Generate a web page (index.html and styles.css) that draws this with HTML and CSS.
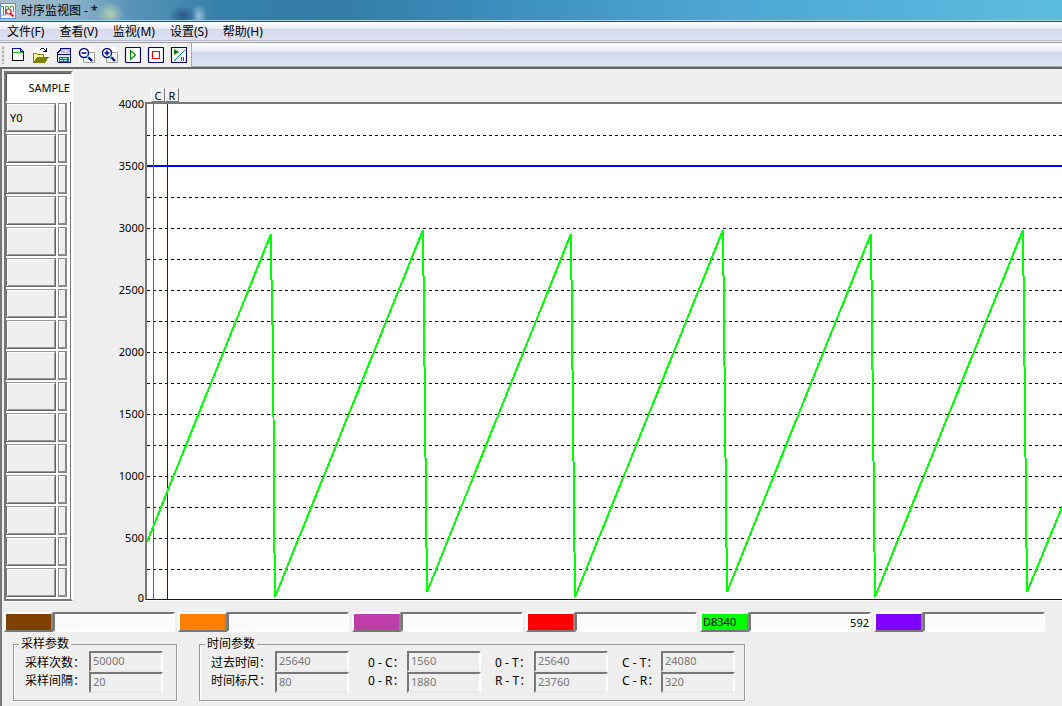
FILE: index.html
```
<!DOCTYPE html>
<html lang="zh-CN">
<head>
<meta charset="utf-8">
<title>时序监视图</title>
<link rel="stylesheet" href="styles.css">
</head>
<body>
<header class="titlebar">
  <svg class="app-icon" width="16" height="16" viewBox="0 0 16 16" fill="none">
    <rect x=".5" y=".5" width="15" height="15" fill="#f4f8ff" stroke="#5b8fe8"/>
    <path d="M1 3.500h2.500V12M5.500 12V3.500h3V6M10.500 5V3.500h3V9" stroke="#5f9a35"/>
    <path d="M1 12.500h5" stroke="#b8cca0"/>
    <circle cx="8.500" cy="8.500" r="2.500" fill="#fff" stroke="#d02020" stroke-width="1.200"/>
    <path d="M10.500 10.500l3 3" stroke="#d02020" stroke-width="1.800"/>
  </svg>
  <h1 class="title">时序监视图 - *</h1>
</header>
<nav class="menubar">
  <button class="menu">文件(F)</button>
  <button class="menu">查看(V)</button>
  <button class="menu">监视(M)</button>
  <button class="menu">设置(S)</button>
  <button class="menu">帮助(H)</button>
</nav>
<div class="toolbar">
  <div class="tools">
    <span class="grip"></span>
    <button class="tool" aria-label="新建"><svg width="17" height="17" viewBox="0 0 17 17" fill="none" shape-rendering="crispEdges"><path d="M4 1h7l3 3v9H4z" fill="#fff"/><path d="M3.500 1v13M14.500 5v9M3 13.500h12" stroke="#000"/><path d="M3 1.500h8M11.500 1v4M12 2.500h1M13 3.500h1M14.500 4v4M11 4.500h4" stroke="#0000d0"/><path d="M4 5.500h10" stroke="#1ec81e"/></svg></button>
    <button class="tool" aria-label="打开"><svg width="17" height="17" viewBox="0 0 17 17" fill="none" shape-rendering="crispEdges"><path d="M1 1h16v15H1z" fill="#fff"/><path d="M8 2.500h1M9 1.500h3M12 2.500h1M13 3.500h1M11 4.500h4M14.500 1v4" stroke="#000070"/><path d="M1 6h4l1 1h6v3H5l-4 5z" fill="#fff8a0"/><path d="M1.500 15V6.500h3l1 1h6V10" stroke="#808000"/><path d="M5 10h12l-4 6H1z" fill="#808000"/></svg></button>
    <button class="tool" aria-label="保存"><svg width="17" height="17" viewBox="0 0 17 17" fill="none" shape-rendering="crispEdges"><path d="M5 1h10v15H2V5z" fill="#e8e8f0"/><path d="M2.500 15V5.500h1v-1h1v-1h1v-2h10V15.500h-13" stroke="#000080"/><path d="M6 2h9v4H6z" fill="#c0c0c8"/><path d="M10 3h2v2h-2z" fill="#fff"/><path d="M3 7.500h12" stroke="#000080"/><path d="M4 10h10v5H4z" fill="#008080"/><path d="M5 11.500h2M8 11.500h4M5 13.500h3M9 13.500h3" stroke="#bde0e0"/></svg></button>
    <button class="tool" aria-label="缩小"><svg width="17" height="17" viewBox="0 0 17 17" fill="none"><path d="M1 0h15v16H1z" fill="#fff"/><path d="M5.500 5.500h11v10h-11z" fill="#f4f4f4" stroke="#a0a0a0"/><circle cx="6" cy="6" r="4.500" fill="#fff" stroke="#000080" stroke-width="1.400"/><path d="M3.500 6h5" stroke="#000080" stroke-width="1.500"/><path d="M9 9l1.500 1.500" stroke="#20c0d0" stroke-width="2"/><path d="M10.500 10.500L14 14" stroke="#000080" stroke-width="2.400"/></svg></button>
    <button class="tool" aria-label="放大"><svg width="17" height="17" viewBox="0 0 17 17" fill="none"><path d="M1 0h15v16H1z" fill="#fff"/><path d="M5.500 5.500h11v10h-11z" fill="#f4f4f4" stroke="#a0a0a0"/><circle cx="6" cy="6" r="4.500" fill="#fff" stroke="#000080" stroke-width="1.400"/><path d="M3.500 6h5M6 3.500v5" stroke="#000080" stroke-width="1.500"/><path d="M9 9l1.500 1.500" stroke="#20c0d0" stroke-width="2"/><path d="M10.500 10.500L14 14" stroke="#000080" stroke-width="2.400"/></svg></button>
    <button class="tool" aria-label="开始"><svg width="17" height="17" viewBox="0 0 17 17" fill="none"><rect x="1.500" y=".5" width="15" height="15" rx="1" fill="#fff" stroke="#000080" stroke-width="1.200"/><path d="M6.500 3.500v9l5-4.500z" stroke="#008000" stroke-width="1.200"/></svg></button>
    <button class="tool" aria-label="停止"><svg width="17" height="17" viewBox="0 0 17 17" fill="none"><rect x="1.500" y=".5" width="15" height="15" rx="1" fill="#fff" stroke="#000080" stroke-width="1.200"/><path d="M5.500 4.500h7v7h-7z" stroke="#f00000" stroke-width="1.200"/></svg></button>
    <button class="tool" aria-label="运行或暂停"><svg width="17" height="17" viewBox="0 0 17 17" fill="none"><path d="M1.500.5h15v15h-15z" fill="#fff" stroke="#000080" stroke-width="1.200"/><path d="M4 2v6l5-3z" fill="#008000"/><path d="M4 14L15 3" stroke="#008080"/><path d="M11.500 10v4M13.500 10v4" stroke="#f00000"/></svg></button>
  </div>
</div>
<main class="workspace">
  <section class="upper">
    <div class="devices">
      <div class="sample">SAMPLE</div>
      <div class="device-rows" id="rows"></div>
    </div>
    <div class="axis">
      <span>4000</span><span>3500</span><span>3000</span><span>2500</span><span>2000</span><span>1500</span><span>1000</span><span>500</span><span>0</span>
    </div>
    <div class="chart">
      <div class="cursors"><button class="cursor">C</button><button class="cursor">R</button></div>
      <div class="plot">
        <svg class="plot-drawing" fill="none">
          <g id="grid"></g>
          <path d="M0 62h6000" stroke="#0000ff" stroke-width="2"/>
          <path d="M6.500 0v496" stroke="#f000f0"/>
          <path d="M20.500 0v496" stroke="#700000"/>
          <polyline class="trace" points="0,438 124,130 125,220 126,221 127,404 128,493 276,126 277,216 278,307 279,397 280,488 424,130 425,220 426,311 427,402 428,493 576,126 577,216 578,307 579,397 580,488 724,130 725,220 726,311 727,402 728,493 876,126 877,216 878,307 879,397 880,488 1028,130"/>
        </svg>
      </div>
    </div>
  </section>
  <section class="channels">
    <div class="channel"><button class="swatch brown" aria-label="通道 1"></button><input class="value" aria-label="数值 1" readonly></div>
    <div class="channel"><button class="swatch orange" aria-label="通道 2"></button><input class="value" aria-label="数值 2" readonly></div>
    <div class="channel"><button class="swatch magenta" aria-label="通道 3"></button><input class="value" aria-label="数值 3" readonly></div>
    <div class="channel"><button class="swatch red" aria-label="通道 4"></button><input class="value" aria-label="数值 4" readonly></div>
    <div class="channel"><button class="swatch green">D8340</button><input class="value" aria-label="D8340" value="592" readonly></div>
    <div class="channel"><button class="swatch violet" aria-label="通道 6"></button><input class="value" aria-label="数值 6" readonly></div>
  </section>
  <section class="parameters">
    <fieldset class="group">
      <legend>采样参数</legend>
      <div class="pair wide">
        <label class="first" for="count">采样次数：</label><input id="count" value="50000" disabled>
        <label for="interval">采样间隔：</label><input id="interval" value="20" disabled>
      </div>
    </fieldset>
    <fieldset class="group times">
      <legend>时间参数</legend>
      <div class="pair wide">
        <label class="first" for="elapsed">过去时间：</label><input id="elapsed" value="25640" disabled>
        <label for="scale">时间标尺：</label><input id="scale" value="80" disabled>
      </div>
      <div class="pair from-zero">
        <label class="first" for="zc">0 - C：</label><input id="zc" value="1560" disabled>
        <label for="zr">0 - R：</label><input id="zr" value="1880" disabled>
      </div>
      <div class="pair">
        <label class="first" for="zt">0 - T：</label><input id="zt" value="25640" disabled>
        <label for="rt">R - T：</label><input id="rt" value="23760" disabled>
      </div>
      <div class="pair">
        <label class="first" for="ct">C - T：</label><input id="ct" value="24080" disabled>
        <label for="cr">C - R：</label><input id="cr" value="320" disabled>
      </div>
    </fieldset>
  </section>
</main>
<script src="script.js"></script>
</body>
</html>
```
FILE: script.js
```
const rows = document.getElementById("rows");
for (let i = 0; i < 16; i++) {
  const row = document.createElement("div");
  row.className = "device-row";
  const name = document.createElement("button");
  name.className = "device";
  name.textContent = i === 0 ? "Y0" : "";
  name.setAttribute("aria-label", i === 0 ? "Y0" : "软元件 " + (i + 1));
  const state = document.createElement("span");
  state.className = "state";
  row.append(name, state);
  rows.append(row);
}

const grid = document.getElementById("grid");
for (let i = 1; i < 16; i++) {
  if (i === 2) continue;
  const line = document.createElementNS("http://www.w3.org/2000/svg", "path");
  line.setAttribute("d", "M0 " + (i * 31 + 0.5) + "h6000");
  line.setAttribute("class", "grid-line");
  grid.append(line);
}
```
FILE: styles.css
```
* { box-sizing: border-box; }
body {
  margin: 0;
  background: #efefef;
  color: #000;
  font: 11px/14px "Noto Sans", "Noto Sans CJK SC", sans-serif;
  overflow-x: hidden;
}
button, input { font: inherit; color: inherit; margin: 0; border-radius: 0; }
button { padding: 0; }

.titlebar {
  display: flex;
  align-items: center;
  gap: 5px;
  height: 22px;
  background:
    radial-gradient(14px 10px at 183px 16px, #2f5c92 20%, transparent),
    radial-gradient(8px 12px at 199px 16px, #8fb8d8 10%, transparent),
    radial-gradient(14px 12px at 110px 14px, #a9c9b4 10%, transparent),
    linear-gradient(90deg, #a5bfd0 0, #8fb3ca 70px, #5994b8 130px, #3580a8 220px, #347da8 340px, #3d90c0 520px, #4ca4d2 700px, #5bbde0 1062px);
  border-bottom: 1px solid #2c5268;
  box-shadow: inset 0 -1px #a4d4ec;
}
.title { margin: 0; font: 12px/20px "Noto Sans", "Noto Sans CJK SC", sans-serif; }

.menubar {
  display: flex;
  gap: 15px;
  height: 21px;
  padding-left: 7px;
  background: linear-gradient(#fff, #e8ebf5 35%, #d4daec 36%, #dfe4f5);
  border-bottom: 1px solid #9a9a9a;
  box-shadow: inset 0 -1px #eee, inset 0 -2px #b4b9cc;
}
.menu { border: 0; background: none; font-size: 12px; line-height: 18px; }

.toolbar {
  height: 26px;
  background: linear-gradient(#fff, #e8ecf7 35%, #d3d9ec 36%, #dfe4f5);
  border-bottom: 2px solid #666;
  box-shadow: inset 0 -1px #aaa9b8;
}
.tools {
  display: flex;
  width: 192px;
  height: 24px;
  padding-left: 1px;
  background: #f0f0f0;
  border-right: 1px solid #aaa;
}
.grip { width: 5px; margin: 3px 0; background: radial-gradient(circle, #bbb 1px, transparent 2px) 0 0 / 4px 4px repeat-y; }
.tool { display: flex; justify-content: center; padding-top: 4px; width: 23px; border: 0; background: none; }

.workspace { border-left: 2px solid #777; padding: 2px 0 0 2px; }
.upper { display: flex; }
.devices {
  width: 69px;
  height: 530px;
  background: #fff;
  border: 2px solid;
  border-color: #777 #fff #777 #777;
  box-shadow: inset -1px 0 #777, 0 1px #fff;
}
.sample {
  height: 28px;
  padding-right: 1px;
  background: #fff;
  border-top: 1px solid #555;
  border-left: 1px solid #555;
  text-align: right;
  line-height: 28px;
}
.device-rows { border-top: 1px solid #fff; }
.device-row { display: flex; gap: 2px; height: 31px; padding-top: 1px; }
.device {
  width: 50px;
  height: 29px;
  padding-left: 3px;
  text-align: left;
  background: #efefef;
  border: 1px solid;
  border-color: #999 #666 #666 #777;
  box-shadow: inset 1px 1px #fff, inset -1px -1px #999;
}
.state { width: 9px; height: 29px; background: #efefef; border: 1px solid #888; border-width: 1px 2px 2px 1px; box-shadow: inset 1px 1px #fff; }

.axis { display: flex; flex-direction: column; width: 72px; padding: 26px 1px 0 0; text-align: right; }
.axis span { height: 62px; }
.axis span:last-child { height: 8px; margin-top: -2px; }
.chart { flex: 1; min-width: 0; padding-top: 17px; }
.cursors { display: flex; padding-left: 6px; height: 14px; }
.cursor {
  width: 14px;
  background: #efefef;
  border: 1px solid;
  border-color: #fff #777 #777 #fff;
  line-height: 14px;
}
.plot { background: #fff; border: 2px solid #777; border-right: 0; border-bottom: 1px solid #0000e0; box-shadow: 0 1px #fff; }
.plot-drawing { display: block; width: 100%; height: 495px; overflow: hidden; }
.grid-line { stroke: #000; stroke-dasharray: 3 3; shape-rendering: crispEdges; }
.trace { stroke: #0f0; stroke-width: 2; shape-rendering: crispEdges; }

.channels { display: flex; gap: 3px; padding: 11px 17px 0 0; }
.channel { display: flex; flex: 1; min-width: 0; }
.swatch {
  width: 49px;
  height: 20px;
  padding-left: 1px;
  text-align: left;
  border: 2px solid;
  border-color: #fff #888 #777 #fff;
}
.brown { background: #804000; }
.orange { background: #ff8000; }
.magenta { background: #c03ca8; }
.red { background: #f00; }
.green { background: #0f0; }
.violet { background: #8000ff; }
.value {
  flex: 1;
  min-width: 0;
  height: 20px;
  padding: 0;
  text-align: right;
  background: #fbfbfb;
  border: 2px solid;
  border-color: #777 #fff #fff #777;
}

.parameters { display: flex; gap: 22px; padding: 5px 9px; }
.group {
  display: flex;
  margin: 0;
  min-width: 0;
  padding: 0 13px 7px 11px;
  border: 1px solid #999;
  box-shadow: 1px 1px #fff, inset 1px 0 #fff;
}
.times { padding-right: 9px; }
.times .pair + .pair { margin-left: 14px; }
.times .pair + .from-zero { margin-left: 19px; }
legend { padding: 0 2px; margin-left: -6px; font-size: 12px; line-height: 14px; }
.pair { display: grid; grid-template-columns: 39px 74px; grid-auto-rows: 21px; }
.pair.wide { grid-template-columns: 64px 74px; }
.pair label { align-self: start; font-size: 12px; line-height: 18px; white-space: nowrap; }
.pair .first { align-self: end; }
.pair input {
  width: 100%;
  height: 21px;
  padding: 0 2px 2px;
  color: #777;
  background: #efefef;
  border: 2px solid;
  border-color: #777 #fff #e8e8e8 #777;
}
```
